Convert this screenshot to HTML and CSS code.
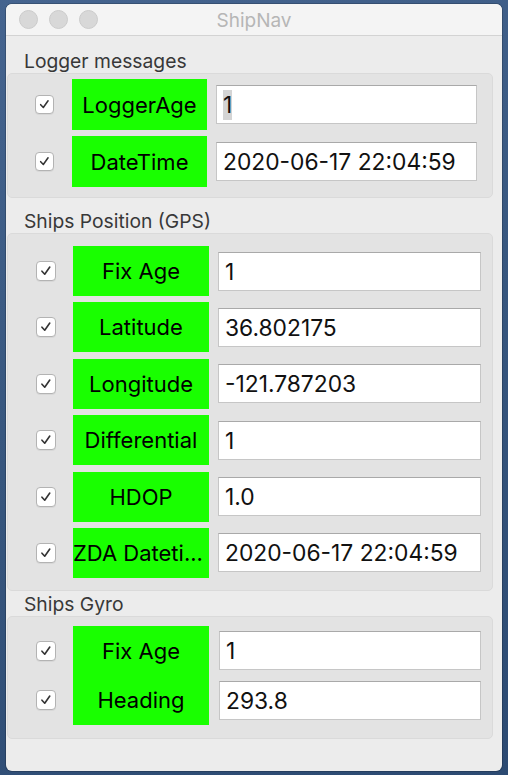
FILE: index.html
```html
<!DOCTYPE html>
<html>
<head>
<meta charset="utf-8">
<title>ShipNav</title>
<link rel="stylesheet" href="styles.css">
</head>
<body>
<div class="desktop">
  <div class="window">
    <div class="titlebar">
      <div class="lights"><span class="light"></span><span class="light"></span><span class="light"></span></div>
      <div class="title">ShipNav</div>
    </div>
    <div class="content">
      <div class="group-title gt-1">Logger messages</div>
      <div class="group g-log">
        <div class="row">
          <span class="check"><svg viewBox="0 0 20 20"><path d="M5.5 10.2 L8.6 13.6 L14.2 5.6"/></svg></span>
          <div class="label">LoggerAge</div>
          <div class="field"><span class="sel">1</span></div>
        </div>
        <div class="row">
          <span class="check"><svg viewBox="0 0 20 20"><path d="M5.5 10.2 L8.6 13.6 L14.2 5.6"/></svg></span>
          <div class="label">DateTime</div>
          <div class="field">2020-06-17 22:04:59</div>
        </div>
      </div>

      <div class="group-title gt-2">Ships Position (GPS)</div>
      <div class="group g-gps">
        <div class="row">
          <span class="check"><svg viewBox="0 0 20 20"><path d="M5.5 10.2 L8.6 13.6 L14.2 5.6"/></svg></span>
          <div class="label">Fix Age</div>
          <div class="field">1</div>
        </div>
        <div class="row">
          <span class="check"><svg viewBox="0 0 20 20"><path d="M5.5 10.2 L8.6 13.6 L14.2 5.6"/></svg></span>
          <div class="label">Latitude</div>
          <div class="field">36.802175</div>
        </div>
        <div class="row">
          <span class="check"><svg viewBox="0 0 20 20"><path d="M5.5 10.2 L8.6 13.6 L14.2 5.6"/></svg></span>
          <div class="label">Longitude</div>
          <div class="field">-121.787203</div>
        </div>
        <div class="row">
          <span class="check"><svg viewBox="0 0 20 20"><path d="M5.5 10.2 L8.6 13.6 L14.2 5.6"/></svg></span>
          <div class="label">Differential</div>
          <div class="field">1</div>
        </div>
        <div class="row">
          <span class="check"><svg viewBox="0 0 20 20"><path d="M5.5 10.2 L8.6 13.6 L14.2 5.6"/></svg></span>
          <div class="label">HDOP</div>
          <div class="field">1.0</div>
        </div>
        <div class="row">
          <span class="check"><svg viewBox="0 0 20 20"><path d="M5.5 10.2 L8.6 13.6 L14.2 5.6"/></svg></span>
          <div class="label label-elide">ZDA Dateti...</div>
          <div class="field">2020-06-17 22:04:59</div>
        </div>
      </div>

      <div class="group-title gt-3">Ships Gyro</div>
      <div class="group g-gyro">
        <div class="row">
          <span class="check"><svg viewBox="0 0 20 20"><path d="M5.5 10.2 L8.6 13.6 L14.2 5.6"/></svg></span>
          <div class="label">Fix Age</div>
          <div class="field">1</div>
        </div>
        <div class="row">
          <span class="check"><svg viewBox="0 0 20 20"><path d="M5.5 10.2 L8.6 13.6 L14.2 5.6"/></svg></span>
          <div class="label">Heading</div>
          <div class="field">293.8</div>
        </div>
      </div>
    </div>
  </div>
</div>
</body>
</html>
```

FILE: styles.css
```css
* { box-sizing: border-box; }

html, body {
  margin: 0;
  padding: 0;
  width: 508px;
  height: 775px;
  overflow: hidden;
}

body {
  font-family: Inter, "Liberation Sans", Arial, sans-serif;
}

.desktop {
  width: 508px;
  height: 775px;
  padding: 4px 6px 0 6px;
  background: linear-gradient(160deg, #45648f 0%, #38577f 45%, #2c4a72 100%);
}

.window {
  width: 496px;
  height: 767px;
  background: #ececec;
  border-radius: 6px;
  overflow: hidden;
  box-shadow: 0 0 0 1px rgba(0, 0, 0, 0.18);
}

.titlebar {
  height: 32px;
  background: #f4f4f4;
  border-bottom: 1px solid #d3d3d3;
  display: flex;
  align-items: center;
  position: relative;
}

.lights {
  display: flex;
  gap: 11px;
  padding-left: 13px;
}

.light {
  width: 19px;
  height: 19px;
  border-radius: 50%;
  background: #d8d8d8;
  border: 1px solid #cbcbcb;
}

.title {
  position: absolute;
  left: 0;
  right: 0;
  top: 0;
  height: 31px;
  line-height: 33px;
  text-align: center;
  font-size: 19px;
  color: #b6b6b6;
}

.content {
  padding-top: 15px;
}

.group-title {
  height: 20px;
  line-height: 21px;
  padding-left: 18px;
  font-size: 19.3px;
  color: #383838;
  margin-bottom: 2px;
}

.gt-2 { margin-top: 13px; }
.gt-3 { margin-top: 3px; }

.group {
  margin: 0 9px 0 1px;
  background: #e3e3e3;
  border: 1px solid #dadada;
  border-radius: 5px;
  display: flex;
  flex-direction: column;
}

.row {
  display: flex;
  align-items: center;
  height: 50px;
}

.check {
  width: 20px;
  height: 20px;
  flex: none;
  background: #fff;
  border: 1px solid #b3b3b3;
  border-radius: 4px;
  margin-right: 17px;
  display: flex;
  box-shadow: 0 1px 0 rgba(0, 0, 0, 0.05);
}

.check svg {
  width: 100%;
  height: 100%;
}

.check path {
  fill: none;
  stroke: #333;
  stroke-width: 1.8;
  stroke-linecap: round;
  stroke-linejoin: round;
}

.label {
  width: 136px;
  height: 100%;
  flex: none;
  background: #19ff00;
  display: flex;
  align-items: center;
  justify-content: center;
  font-size: 22px;
  color: #000;
  white-space: nowrap;
  overflow: hidden;
}

.label-elide {
  justify-content: flex-start;
}

.field {
  margin-left: 9px;
  width: 263px;
  height: 39px;
  flex: none;
  background: #fff;
  border: 1px solid #c6c6c6;
  border-top-color: #a9a9a9;
  display: flex;
  align-items: center;
  padding-left: 6px;
  font-size: 22.8px;
  color: #111;
  white-space: nowrap;
}

.sel {
  background: #d4d4d4;
  line-height: 30px;
}

/* Logger messages group */
.g-log {
  padding: 5px 0 10px 27px;
  gap: 6px;
}
.g-log .row { height: 51px; }
.g-log .check { width: 19px; height: 19px; margin-right: 18px; }
.g-log .label { width: 135px; }
.g-log .field { width: 261px; }

/* GPS group */
.g-gps {
  padding: 12px 0 12px 28px;
  gap: 6.4px;
}

/* Gyro group */
.g-gyro {
  padding: 9px 0 13px 28px;
  gap: 0;
}
.g-gyro .row { height: 49.5px; }
.g-gyro .field { margin-left: 10px; width: 262px; }
```
